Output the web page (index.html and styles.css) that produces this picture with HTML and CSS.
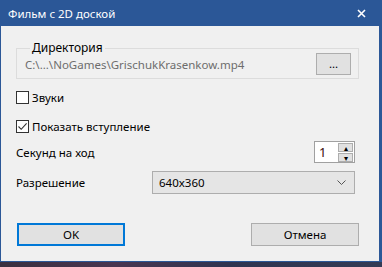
FILE: index.html
```html
<!DOCTYPE html>
<html lang="ru">
<head>
    <meta charset="UTF-8">
    <title>Фильм с 2D доской</title>
    <link rel="stylesheet" href="styles.css">
</head>
<body>
    <div class="window">
        <div class="titlebar">
            <span class="title">Фильм с 2D доской</span>
            <svg class="close" width="9" height="9" viewBox="0 0 9 9">
                <path d="M1 1 L8 8 M8 1 L1 8" stroke="#fff" stroke-width="1.6"/>
            </svg>
        </div>
        <div class="content">
            <fieldset class="group">
                <legend>Директория</legend>
                <span class="path">C:\...\NoGames\GrischukKrasenkow.mp4</span>
                <button class="btn browse">...</button>
            </fieldset>

            <label class="check first">
                <span class="box"></span>
                <span>Звуки</span>
            </label>
            <label class="check second">
                <span class="box">
                    <svg width="11" height="11" viewBox="0 0 11 11">
                        <path d="M1.5 5.5 L4.2 8.3 L9.6 2.4" fill="none" stroke="#333" stroke-width="1.1"/>
                    </svg>
                </span>
                <span>Показать вступление</span>
            </label>

            <div class="row spin-row">
                <span>Секунд на ход</span>
                <div class="spin">
                    <span class="spin-value">1</span>
                    <div class="spin-btns">
                        <span class="spin-btn">&#9652;</span>
                        <span class="spin-btn">&#9662;</span>
                    </div>
                </div>
            </div>

            <div class="row combo-row">
                <span>Разрешение</span>
                <div class="combo">
                    <span>640x360</span>
                    <svg width="9" height="5" viewBox="0 0 9 5">
                        <path d="M0.5 0.5 L4.5 4.5 L8.5 0.5" fill="none" stroke="#555" stroke-width="1"/>
                    </svg>
                </div>
            </div>

            <div class="buttons">
                <button class="btn big default">OK</button>
                <button class="btn big">Отмена</button>
            </div>
        </div>
        <div class="desktop"></div>
    </div>
</body>
</html>
```

FILE: styles.css
```css
body {
    margin: 0;
    padding: 0;
    background-color: #2b5797;
    font-family: "Noto Sans", "Open Sans", sans-serif;
    font-size: 11.5px;
    color: #000;
}
.window {
    width: 382px;
    height: 267px;
    display: flex;
    flex-direction: column;
    background-color: #2b5797;
}
.titlebar {
    height: 26px;
    display: flex;
    align-items: center;
    justify-content: space-between;
    padding: 0 16px 0 8px;
    color: white;
}
.title {
    font-size: 11.5px;
}
.content {
    height: 235px;
    margin: 0 3px 0 1px;
    padding: 17px 20px 0 15px;
    background-color: #f0f0f0;
    box-sizing: border-box;
}
.desktop {
    height: 5px;
    margin-top: 1px;
    background: linear-gradient(90deg, #3a2f3f, #4a3550 30%, #2f3450 60%, #343b55);
}
.group {
    margin: 0;
    padding: 0 7px 3px 8px;
    border: 1px solid #dcdcdc;
    display: flex;
    align-items: center;
    justify-content: space-between;
    min-width: 0;
}
.group legend {
    padding: 0 2px;
    margin-left: 5px;
    line-height: 10px;
    font-size: 12px;
}
.path {
    color: #6d6d6d;
}
.btn {
    font-family: inherit;
    font-size: 11.5px;
    background-color: #e1e1e1;
    border: 1px solid #adadad;
    color: #000;
    padding: 0;
    box-sizing: border-box;
}
.browse {
    width: 35px;
    height: 22px;
    line-height: 14px;
}
.check {
    display: flex;
    align-items: center;
    gap: 3px;
    height: 17px;
}
.check.first {
    margin-top: 10px;
}
.check.second {
    margin-top: 12px;
}
.box {
    width: 13px;
    height: 13px;
    border: 1px solid #333;
    background: white;
    box-sizing: border-box;
    display: flex;
    align-items: center;
    justify-content: center;
}
.row {
    display: flex;
    align-items: center;
    justify-content: space-between;
}
.spin-row {
    margin-top: 6px;
    height: 22px;
}
.spin {
    width: 41px;
    height: 22px;
    border: 1px solid #a0a0a0;
    background: white;
    box-sizing: border-box;
    display: flex;
    margin-right: 4px;
}
.spin-value {
    flex: 1;
    padding-left: 4px;
    line-height: 20px;
    font-size: 13px;
    color: #3b0a0a;
}
.spin-btns {
    width: 16px;
    display: flex;
    flex-direction: column;
    gap: 1px;
    padding: 1px 1px 1px 0;
    box-sizing: border-box;
}
.spin-btn {
    flex: 1;
    background: #e1e1e1;
    border: 1px solid #adadad;
    font-size: 8px;
    line-height: 7px;
    text-align: center;
    color: #000;
}
.combo-row {
    margin-top: 8px;
}
.combo {
    width: 203px;
    height: 23px;
    margin-right: 4px;
    padding: 0 8px 0 6px;
    background: #e5e5e5;
    border: 1px solid #adadad;
    box-sizing: border-box;
    display: flex;
    align-items: center;
    justify-content: space-between;
}
.buttons {
    margin-top: 29px;
    padding-left: 1px;
    display: flex;
    justify-content: space-between;
}
.big {
    width: 108px;
    height: 23px;
}
.default {
    border: 2px solid #0078d7;
}
```
